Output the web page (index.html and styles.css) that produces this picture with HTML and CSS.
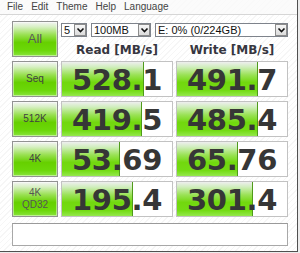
FILE: index.html
```html
<!DOCTYPE html>
<html lang="en">
<head>
    <meta charset="UTF-8">
    <title>CrystalDiskMark</title>
    <link rel="stylesheet" href="styles.css">
</head>
<body>

<div class="window">
    <div class="menubar">
        <span>File</span>
        <span>Edit</span>
        <span>Theme</span>
        <span>Help</span>
        <span>Language</span>
    </div>

    <div class="main">
        <div class="grid">
            <div class="btn btn-all">All</div>
            <div class="top">
                <div class="combos">
                    <div class="combo c-count"><span class="val">5</span><span class="arrow"><svg width="9" height="8" viewBox="0 0 9 8"><polyline points="1.5,2.5 4.5,5.5 7.5,2.5" fill="none" stroke="#111" stroke-width="1.6"/></svg></span></div>
                    <div class="combo c-size"><span class="val">100MB</span><span class="arrow"><svg width="9" height="8" viewBox="0 0 9 8"><polyline points="1.5,2.5 4.5,5.5 7.5,2.5" fill="none" stroke="#111" stroke-width="1.6"/></svg></span></div>
                    <div class="combo c-drive"><span class="val">E: 0% (0/224GB)</span><span class="arrow"><svg width="9" height="8" viewBox="0 0 9 8"><polyline points="1.5,2.5 4.5,5.5 7.5,2.5" fill="none" stroke="#111" stroke-width="1.6"/></svg></span></div>
                </div>
                <div class="heads">
                    <div>Read [MB/s]</div>
                    <div>Write [MB/s]</div>
                </div>
            </div>

            <div class="btn">Seq</div>
            <div class="cell" style="--w:82px"><span class="num">528.1</span></div>
            <div class="cell" style="--w:81px"><span class="num">491.7</span></div>

            <div class="btn">512K</div>
            <div class="cell" style="--w:80px"><span class="num">419.5</span></div>
            <div class="cell" style="--w:81px"><span class="num">485.4</span></div>

            <div class="btn">4K</div>
            <div class="cell" style="--w:58px"><span class="num">53.69</span></div>
            <div class="cell" style="--w:61px"><span class="num">65.76</span></div>

            <div class="btn btn-two">4K<br>QD32</div>
            <div class="cell" style="--w:71px"><span class="num">195.4</span></div>
            <div class="cell" style="--w:76px"><span class="num">301.4</span></div>
        </div>

        <div class="comment"></div>
    </div>
</div>

</body>
</html>
```

FILE: styles.css
```css
body{
    margin: 0;
    background-color: #ececec;
    font-family: "Liberation Sans", Arial, sans-serif;
}

.window{
    width: 297px;
    height: 251px;
    border-right: 1px solid #505050;
    border-bottom: 1px solid #505050;
    background: repeating-linear-gradient(-45deg, #ffffff 0 3px, #f6f6f6 3px 4px);
}

.menubar{
    height: 14px;
    border-bottom: 1px solid #d6d6d6;
    display: flex;
    gap: 8px;
    padding-left: 7px;
    font-size: 10px;
    line-height: 14px;
    color: #444;
    background-color: rgba(250, 250, 250, 0.8);
}

.main{
    padding: 6px 0 0 12px;
}

.grid{
    display: grid;
    grid-template-columns: 46px 112px 112px;
    grid-auto-rows: 36px;
    column-gap: 3px;
    row-gap: 4px;
}

.btn{
    box-sizing: border-box;
    border: 1px solid #929292;
    box-shadow: inset 0 0 0 1px rgba(255, 255, 255, 0.45);
    background: linear-gradient(to bottom, #f4f4f4 0%, #d8f0c4 14%, #98e050 38%, #66d000 60%, #6cd80a 84%, #8ae43e 100%);
    display: flex;
    align-items: center;
    justify-content: center;
    text-align: center;
    font-size: 10px;
    line-height: 12px;
    color: #404040;
}

.btn-all{
    font-size: 13px;
    color: #5a5a5a;
}

.btn-two{
    color: #555;
}

.top{
    grid-column: span 2;
    padding-top: 2px;
}

.combos{
    display: flex;
    gap: 4px;
    height: 14px;
}

.combo{
    box-sizing: border-box;
    height: 14px;
    border: 1px solid #7e838b;
    background-color: #fff;
    display: flex;
}

.c-count{ width: 26px; }
.c-size{ width: 60px; }
.c-drive{ width: 133px; }

.val{
    flex: 1;
    padding-left: 2px;
    font-size: 11px;
    line-height: 12px;
    color: #111;
    white-space: nowrap;
}

.arrow{
    box-sizing: border-box;
    width: 12px;
    height: 12px;
    border: 1px solid #8c8c8c;
    background: linear-gradient(to bottom, #f6f6f6, #dcdcdc);
    display: flex;
    align-items: center;
    justify-content: center;
}

.heads{
    display: flex;
    gap: 3px;
    padding-top: 6px;
    font-family: "DejaVu Sans", Verdana, sans-serif;
    font-weight: bold;
    font-size: 12px;
    line-height: 14px;
    color: #363640;
}

.heads div{
    width: 112px;
    text-align: center;
}

.cell{
    box-sizing: border-box;
    border: 1px solid #c2c2c2;
    background:
        linear-gradient(#4f9a1a, #4f9a1a) calc(var(--w) - 1px) 0 / 1px 100% no-repeat,
        linear-gradient(to bottom, #eeeeee 0%, #d2eec0 14%, #9ae256 38%, #72d80e 60%, #74dc14 84%, #94e84c 100%) 0 0 / var(--w) 100% no-repeat,
        #fff;
    text-align: center;
    padding-top: 2px;
}

.num{
    font-family: "DejaVu Sans", Verdana, sans-serif;
    font-weight: bold;
    font-size: 29px;
    line-height: 32px;
    letter-spacing: -0.3px;
    color: #363636;
}

.comment{
    box-sizing: border-box;
    margin-top: 6px;
    width: 276px;
    height: 23px;
    border: 1px solid #a8a8a8;
    border-top-color: #9a9a9a;
    background-color: #fff;
}
```
